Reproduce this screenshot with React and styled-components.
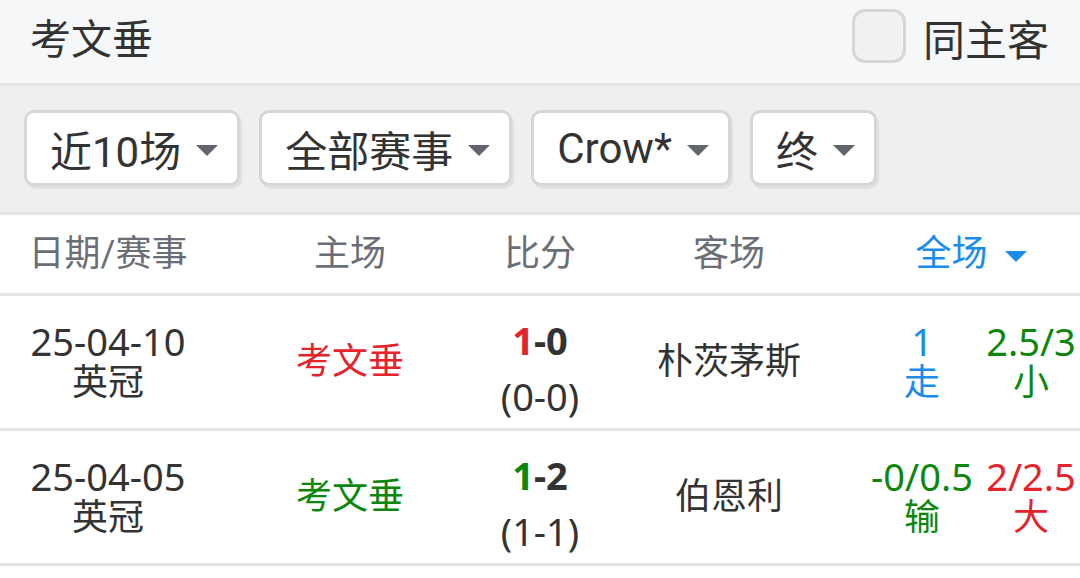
import React from "react";
import styled, { createGlobalStyle } from "styled-components";

const Global = createGlobalStyle`
  html, body { margin: 0; padding: 0; background: #ffffff; }
  body { font-family: Roboto, "Noto Sans CJK SC", sans-serif; color: #333333; }
  * { box-sizing: border-box; }
`;

const RED = "#e5232b";
const GREEN = "#0c870c";
const BLUE = "#1a8ceb";
const NUM_FONT = `"Noto Sans", "Noto Sans CJK SC", sans-serif`;

const Page = styled.div`
  width: 1080px;
  display: flex;
  flex-direction: column;
`;

const TopBar = styled.header`
  height: 86px;
  background: #f6f7f9;
  border-bottom: 3px solid #e5e5e5;
  display: flex;
  align-items: center;
  justify-content: space-between;
  padding: 0 31px 0 30px;
`;

const Title = styled.div`
  font-size: 41px;
  line-height: 50px;
  margin-top: -4px;
  color: #333333;
`;

const CheckLabel = styled.label`
  display: flex;
  align-items: center;
  gap: 17px;
  font-size: 42px;
  line-height: 50px;
  color: #333333;
`;

const CheckBox = styled.span`
  width: 54px;
  height: 54px;
  border: 3px solid #d6d6d6;
  border-radius: 13px;
  background: #f1f1f1;
  margin-top: -12px;
`;

const FilterBar = styled.div`
  height: 129px;
  background: #efefef;
  border-bottom: 3px solid #e5e5e5;
  display: flex;
  align-items: flex-start;
  gap: 19px;
  padding: 24px 24px 0 24px;
`;

const Select = styled.div`
  height: 76px;
  display: flex;
  align-items: center;
  gap: 15px;
  padding: 0 19px 0 23px;
  background: #ffffff;
  border: 3px solid #d7d7d7;
  border-radius: 10px;
  box-shadow: 2px 3px 1px #e0e0e0;
  font-size: 42px;
  color: #333333;
`;

const Caret = styled.span`
  width: 0;
  height: 0;
  border-left: 11px solid transparent;
  border-right: 11px solid transparent;
  border-top: 11px solid ${(p) => p.$color || "#63656d"};
  margin-top: 4px;
`;

const Grid = styled.div`
  display: grid;
  grid-template-columns: 216px 268px 112px 266px 218px;
  align-items: center;
  border-bottom: 3px solid #e4e4e4;
  height: ${(p) => p.$h}px;
`;

const HeadCell = styled.div`
  display: flex;
  align-items: center;
  justify-content: center;
  gap: 17px;
  font-size: 36px;
  line-height: 48px;
  color: ${(p) => (p.$active ? BLUE : "#6b6e76")};
`;

const Cell = styled.div`
  display: flex;
  flex-direction: column;
  align-items: center;
  justify-content: center;
  padding-top: ${(p) => p.$pt || 0}px;
`;

const Num = styled.div`
  font-family: ${NUM_FONT};
  font-size: 38px;
  line-height: 42px;
  color: ${(p) => p.$color || "#333333"};
  white-space: nowrap;
`;

const Cjk = styled.div`
  font-size: 36px;
  line-height: 42px;
  color: ${(p) => p.$color || "#333333"};
  white-space: nowrap;
`;

const Team = styled.div`
  font-size: 36px;
  line-height: 48px;
  color: ${(p) => p.$color || "#333333"};
`;

const ScoreMain = styled.div`
  font-family: ${NUM_FONT};
  font-size: 38px;
  font-weight: 700;
  line-height: 56px;
  color: #333333;
`;

const ScoreHalf = styled.div`
  font-family: ${NUM_FONT};
  font-size: 38px;
  line-height: 56px;
  color: #333333;
`;

const Mark = styled.span`
  color: ${(p) => p.$color};
`;

const OddsPair = styled.div`
  display: grid;
  grid-template-columns: 120px 98px;
  align-items: center;
`;

const filters = ["近10场", "全部赛事", "Crow*", "终"];

const rows = [
  {
    date: "25-04-10",
    league: "英冠",
    home: "考文垂",
    homeColor: RED,
    first: "1",
    firstColor: RED,
    rest: "-0",
    half: "(0-0)",
    away: "朴茨茅斯",
    hc: { v: "1", t: "走", c: BLUE },
    ou: { v: "2.5/3", t: "小", c: GREEN },
  },
  {
    date: "25-04-05",
    league: "英冠",
    home: "考文垂",
    homeColor: GREEN,
    first: "1",
    firstColor: GREEN,
    rest: "-2",
    half: "(1-1)",
    away: "伯恩利",
    hc: { v: "-0/0.5", t: "输", c: GREEN },
    ou: { v: "2/2.5", t: "大", c: RED },
  },
];

export default function App() {
  return (
    <Page>
      <Global />
      <TopBar>
        <Title>考文垂</Title>
        <CheckLabel>
          <CheckBox />
          同主客
        </CheckLabel>
      </TopBar>
      <FilterBar>
        {filters.map((f) => (
          <Select key={f}>
            {f}
            <Caret />
          </Select>
        ))}
      </FilterBar>
      <Grid $h={81}>
        <HeadCell>日期/赛事</HeadCell>
        <HeadCell>主场</HeadCell>
        <HeadCell>比分</HeadCell>
        <HeadCell>客场</HeadCell>
        <HeadCell $active>
          全场
          <Caret $color={BLUE} />
        </HeadCell>
      </Grid>
      {rows.map((r) => (
        <Grid $h={135} key={r.date}>
          <Cell>
            <Num>{r.date}</Num>
            <Cjk>{r.league}</Cjk>
          </Cell>
          <Cell>
            <Team $color={r.homeColor}>{r.home}</Team>
          </Cell>
          <Cell $pt={12}>
            <ScoreMain>
              <Mark $color={r.firstColor}>{r.first}</Mark>
              {r.rest}
            </ScoreMain>
            <ScoreHalf>{r.half}</ScoreHalf>
          </Cell>
          <Cell>
            <Team>{r.away}</Team>
          </Cell>
          <OddsPair>
            <Cell>
              <Num $color={r.hc.c}>{r.hc.v}</Num>
              <Cjk $color={r.hc.c}>{r.hc.t}</Cjk>
            </Cell>
            <Cell>
              <Num $color={r.ou.c}>{r.ou.v}</Num>
              <Cjk $color={r.ou.c}>{r.ou.t}</Cjk>
            </Cell>
          </OddsPair>
        </Grid>
      ))}
    </Page>
  );
}
